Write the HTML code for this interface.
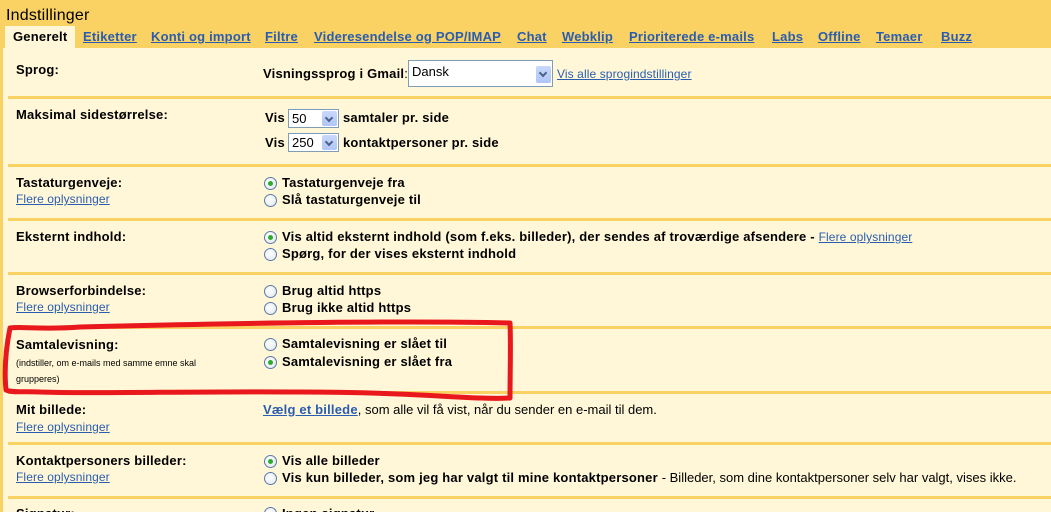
<!DOCTYPE html>
<html><head><meta charset="utf-8"><style>
*{margin:0;padding:0}
html{width:1051px;height:512px;overflow:hidden}
body{width:1051px;height:512px;overflow:hidden;background:#fad163;font-family:"Liberation Sans",Tahoma,sans-serif;position:relative}
.c{position:absolute;left:3px;top:48px;width:1048px;height:464px;background:#fff7d7}
.t{position:absolute;white-space:nowrap;font-size:13px;line-height:16px;font-weight:bold;color:#000;letter-spacing:0.2px}
.n{font-weight:normal;letter-spacing:0}
a,.a{color:#2a5db0;text-decoration:underline}
.l{font-weight:normal;font-size:12px;color:#2a5db0;text-decoration:underline;letter-spacing:0.1px}
.s{position:absolute;left:8px;width:1043px;height:3px;background:#fad163}
.r{position:absolute;width:11px;height:11px;border:1px solid #5a7ca8;border-radius:50%;background:radial-gradient(circle at 40% 40%,#fff,#dfe6ef)}
.r.on::after{content:"";position:absolute;left:3px;top:3px;width:5px;height:5px;border-radius:50%;background:#2faa2f}
.sel{position:absolute;border:1px solid #7f9db9;background:#fff;height:19px;font-size:13px;font-weight:normal;line-height:17px;padding-left:3px;box-sizing:border-box}
.sel b{position:absolute;right:1px;top:1px;width:15px;height:15px;background:linear-gradient(#c9d8fc,#b0c6f6);border-radius:2px}
.sel b::after{content:"";position:absolute;left:4px;top:4px;width:4px;height:4px;border-right:2px solid #4d6185;border-bottom:2px solid #4d6185;transform:rotate(45deg)}
.tabs .t{top:29px;color:#2a5db0;text-decoration:underline}
</style></head><body>
<div class="t" style="left:6px;top:6px;font-size:16px;font-weight:normal;line-height:20px">Indstillinger</div>
<div style="position:absolute;left:5px;top:26px;width:70px;height:22px;background:#fff7d7"></div>
<div class="tabs">
<div class="t" style="left:13px;color:#000;text-decoration:none">Generelt</div>
<div class="t" style="left:83px">Etiketter</div>
<div class="t" style="left:151px">Konti og import</div>
<div class="t" style="left:265px">Filtre</div>
<div class="t" style="left:314px">Videresendelse og POP/IMAP</div>
<div class="t" style="left:517px">Chat</div>
<div class="t" style="left:562px">Webklip</div>
<div class="t" style="left:629px">Prioriterede e-mails</div>
<div class="t" style="left:772px">Labs</div>
<div class="t" style="left:818px">Offline</div>
<div class="t" style="left:876px">Temaer</div>
<div class="t" style="left:941px">Buzz</div>
</div>
<div class="c"></div>

<div class="t" style="left:16px;top:62px">Sprog:</div>
<div class="t" style="left:263px;top:66px">Visningssprog i Gmail<span class="n">:</span></div>
<div class="sel" style="left:408px;top:60px;width:145px;height:27px;line-height:22px">Dansk<b style="top:5px;height:17px"></b></div>
<div class="t l" style="left:557px;top:66px">Vis alle sprogindstillinger</div>
<div class="s" style="top:96px"></div>

<div class="t" style="left:16px;top:107px">Maksimal sidestørrelse:</div>
<div class="t" style="left:265px;top:110px">Vis</div>
<div class="sel" style="left:288px;top:109px;width:51px">50<b></b></div>
<div class="t" style="left:343px;top:110px">samtaler pr. side</div>
<div class="t" style="left:265px;top:135px">Vis</div>
<div class="sel" style="left:288px;top:133px;width:51px">250<b></b></div>
<div class="t" style="left:343px;top:135px">kontaktpersoner pr. side</div>
<div class="s" style="top:164px"></div>

<div class="t" style="left:16px;top:175px">Tastaturgenveje:</div>
<div class="t l" style="left:16px;top:191px">Flere oplysninger</div>
<div class="r on" style="left:264px;top:177px"></div><div class="t" style="left:282px;top:175px">Tastaturgenveje fra</div>
<div class="r" style="left:264px;top:194px"></div><div class="t" style="left:282px;top:192px">Slå tastaturgenveje til</div>
<div class="s" style="top:218px"></div>

<div class="t" style="left:16px;top:229px">Eksternt indhold:</div>
<div class="r on" style="left:264px;top:231px"></div><div class="t" style="left:282px;top:229px">Vis altid eksternt indhold (som f.eks. billeder), der sendes af troværdige afsendere - <span class="l">Flere oplysninger</span></div>
<div class="r" style="left:264px;top:248px"></div><div class="t" style="left:282px;top:246px">Spørg, for der vises eksternt indhold</div>
<div class="s" style="top:272px"></div>

<div class="t" style="left:16px;top:283px">Browserforbindelse:</div>
<div class="t l" style="left:16px;top:299px">Flere oplysninger</div>
<div class="r" style="left:264px;top:285px"></div><div class="t" style="left:282px;top:283px">Brug altid https</div>
<div class="r" style="left:264px;top:302px"></div><div class="t" style="left:282px;top:300px">Brug ikke altid https</div>
<div class="s" style="top:326px"></div>

<div class="t" style="left:16px;top:337px">Samtalevisning:</div>
<div class="t n" style="left:16px;top:355px;font-size:9px;line-height:16px">(indstiller, om e-mails med samme emne skal<br>grupperes)</div>
<div class="r" style="left:264px;top:338px"></div><div class="t" style="left:282px;top:336px">Samtalevisning er slået til</div>
<div class="r on" style="left:264px;top:356px"></div><div class="t" style="left:282px;top:354px">Samtalevisning er slået fra</div>
<div class="s" style="top:391px"></div>

<div class="t" style="left:16px;top:402px">Mit billede:</div>
<div class="t l" style="left:16px;top:419px">Flere oplysninger</div>
<div class="t" style="left:263px;top:402px"><span class="a">Vælg et billede</span><span class="n">, som alle vil få vist, når du sender en e-mail til dem.</span></div>
<div class="s" style="top:442px"></div>

<div class="t" style="left:16px;top:453px">Kontaktpersoners billeder:</div>
<div class="t l" style="left:16px;top:469px">Flere oplysninger</div>
<div class="r on" style="left:264px;top:455px"></div><div class="t" style="left:282px;top:453px">Vis alle billeder</div>
<div class="r" style="left:264px;top:472px"></div><div class="t" style="left:282px;top:470px">Vis kun billeder, som jeg har valgt til mine kontaktpersoner <span class="n">- Billeder, som dine kontaktpersoner selv har valgt, vises ikke.</span></div>
<div class="s" style="top:496px"></div>
<div class="t" style="left:16px;top:506px">Signatur:</div>
<div class="r" style="left:264px;top:507px"></div><div class="t" style="left:282px;top:506px">Ingen signatur</div>

<svg style="position:absolute;left:0;top:0" width="1051" height="512">
<path d="M10,328 C20,326 40,330 80,327 C200,324 380,320 510,323 C511,345 510,372 510,398 C470,400 420,392 300,392 C200,391 90,394 40,392 C25,391 12,393 6,390 C4,370 6,348 10,328 Z" fill="none" stroke="#e8181c" stroke-width="5" stroke-linejoin="round"/>
</svg>
</body></html>
